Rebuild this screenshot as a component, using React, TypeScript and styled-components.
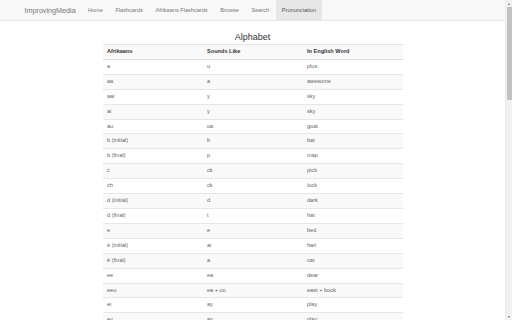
import React from 'react'
import styled, { createGlobalStyle } from 'styled-components'

const GlobalStyle = createGlobalStyle`
  html, body {
    margin: 0;
    padding: 0;
    background: #fff;
    font-family: 'Liberation Sans', Arial, sans-serif;
    color: #333;
    overflow: hidden;
  }
`

const Window = styled.div`
  display: flex;
  height: 100vh;
  overflow: hidden;
`

const Page = styled.div`
  flex: 1;
  min-width: 0;
  overflow: hidden;
`

const Scrollbar = styled.div`
  width: 7px;
  display: flex;
  flex-direction: column;
  background: #f1f1f1;
  border-left: 1px solid #ebebeb;
  box-sizing: border-box;
`

const ScrollButton = styled.div<{ $down?: boolean }>`
  height: 7px;
  display: flex;
  align-items: center;
  justify-content: center;

  &::after {
    content: '';
    width: 0;
    height: 0;
    border-left: 1.5px solid transparent;
    border-right: 1.5px solid transparent;
    ${({ $down }) =>
      $down ? 'border-top: 2px solid #6a6a6a;' : 'border-bottom: 2px solid #6a6a6a;'}
  }
`

const Track = styled.div`
  flex: 1;
  padding: 0 0.5px;
`

const Thumb = styled.div`
  height: 93px;
  background: #c1c1c1;
`

const Navbar = styled.nav`
  height: 20px;
  background: #f8f8f8;
  border-bottom: 1px solid #e7e7e7;
`

const NavContainer = styled.div`
  max-width: 456px;
  margin: 0 auto;
  padding: 0 6px;
  display: flex;
  align-items: stretch;
  height: 100%;
`

const Brand = styled.a`
  display: flex;
  align-items: center;
  padding-right: 6px;
  font-size: 7.2px;
  color: #777;
  text-decoration: none;
`

const NavLink = styled.a<{ $active?: boolean }>`
  display: flex;
  align-items: center;
  padding: 0 6.3px;
  font-size: 5.6px;
  color: ${({ $active }) => ($active ? '#555' : '#777')};
  background: ${({ $active }) => ($active ? '#e7e7e7' : 'transparent')};
  text-decoration: none;
`

const Content = styled.main`
  width: 300px;
  margin: 0 auto;
  padding-top: 11px;
`

const Title = styled.h3`
  margin: 0 0 2px;
  font-size: 9px;
  line-height: 10px;
  font-weight: 400;
  text-align: center;
  color: #333;
`

const Table = styled.table`
  width: 100%;
  border-collapse: collapse;
  table-layout: fixed;
  font-size: 5.6px;
`

const HeadCell = styled.th`
  width: 33.33%;
  text-align: left;
  font-weight: 700;
  color: #333;
  padding: 3px 4.5px;
  line-height: 7.9px;
  background: #f9f9f9;
  border-top: 1px solid #e4e4e4;
  border-bottom: 1px solid #ddd;
`

const Row = styled.tr`
  &:nth-of-type(even) {
    background: #f9f9f9;
  }
`

const Cell = styled.td`
  padding: 3px 4.5px;
  line-height: 7.9px;
  color: #666;
  border-top: 1px solid #e6e6e6;
  white-space: nowrap;
`

const rows: [string, string, string][] = [
  ['a', 'u', 'plus'],
  ['aa', 'a', 'awesome'],
  ['aai', 'y', 'sky'],
  ['ai', 'y', 'sky'],
  ['au', 'oa', 'goat'],
  ['b (initial)', 'b', 'bat'],
  ['b (final)', 'p', 'map'],
  ['c', 'ck', 'pick'],
  ['ch', 'ck', 'lock'],
  ['d (initial)', 'd', 'dark'],
  ['d (final)', 't', 'hat'],
  ['e', 'e', 'bed'],
  ['ê (initial)', 'ai', 'hair'],
  ['ê (final)', 'a', 'cat'],
  ['ee', 'ea', 'dear'],
  ['eeu', 'ea + oo', 'east + book'],
  ['ei', 'ay', 'play'],
  ['ey', 'ay', 'play'],
]

const links = ['Home', 'Flashcards', 'Afrikaans Flashcards', 'Browse', 'Search', 'Pronunciation']

export default function App() {
  return (
    <Window>
      <GlobalStyle />
      <Page>
        <Navbar>
          <NavContainer>
            <Brand href="#">ImprovingMedia</Brand>
            {links.map((l) => (
              <NavLink key={l} href="#" $active={l === 'Pronunciation'}>
                {l}
              </NavLink>
            ))}
          </NavContainer>
        </Navbar>
        <Content>
          <Title>Alphabet</Title>
          <Table>
            <thead>
              <tr>
                <HeadCell>Afrikaans</HeadCell>
                <HeadCell>Sounds Like</HeadCell>
                <HeadCell>In English Word</HeadCell>
              </tr>
            </thead>
            <tbody>
              {rows.map(([af, sound, word], i) => (
                <Row key={i}>
                  <Cell>{af}</Cell>
                  <Cell>{sound}</Cell>
                  <Cell>{word}</Cell>
                </Row>
              ))}
            </tbody>
          </Table>
        </Content>
      </Page>
      <Scrollbar>
        <ScrollButton />
        <Track>
          <Thumb />
        </Track>
        <ScrollButton $down />
      </Scrollbar>
    </Window>
  )
}
